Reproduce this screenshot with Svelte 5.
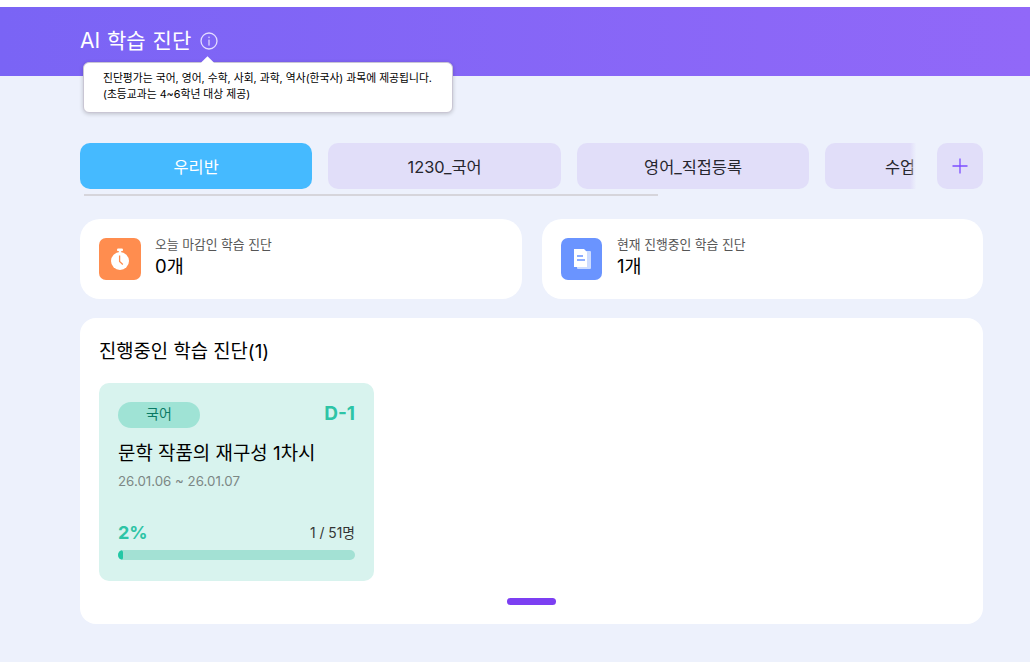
<script>
  const tabs = ['우리반', '1230_국어', '영어_직접등록', '수업활용_테스트'];
</script>

<div class="page">
  <header class="hero">
    <div class="hero-inner">
      <h1>AI 학습 진단</h1>
      <svg class="info" width="18" height="18" viewBox="0 0 18 18" fill="none">
        <circle cx="9" cy="9" r="8" stroke="#e4dcff" stroke-width="1.3" />
        <rect x="8.4" y="7.6" width="1.2" height="6" fill="#e4dcff" />
        <rect x="8.4" y="4.6" width="1.2" height="1.5" fill="#e4dcff" />
      </svg>
      <div class="tip">
        <span class="tip-arrow"></span>
        <p>진단평가는 국어, 영어, 수학, 사회, 과학, 역사(한국사) 과목에 제공됩니다.</p>
        <p>(초등교과는 4~6학년 대상 제공)</p>
      </div>
    </div>
  </header>

  <main class="content">
    <div class="tabs-row">
      <div class="tabs-view">
        <div class="tabs">
          {#each tabs as t, i}
            <button class="tab" class:active={i === 0}>{t}</button>
          {/each}
        </div>
        <span class="fade"></span>
      </div>
      <button class="add" aria-label="추가">
        <svg width="16" height="16" viewBox="0 0 16 16"><path d="M8 .5v15M.5 8h15" stroke="#7c4dff" stroke-width="1.3" fill="none" /></svg>
      </button>
    </div>
    <div class="track"></div>

    <section class="stats">
      <div class="stat">
        <div class="ico orange">
          <svg width="22" height="24" viewBox="0 0 22 24">
            <rect x="8" y="1.5" width="6" height="2.6" rx="1.2" fill="#fff" />
            <rect x="9.8" y="3" width="2.4" height="3" fill="#fff" />
            <circle cx="11" cy="14" r="9" fill="#fff" />
            <path d="M10.6 8.5v6l3.2 3" stroke="#ff8d4f" stroke-width="1.3" fill="none" />
          </svg>
        </div>
        <div class="stat-text">
          <span class="label">오늘 마감인 학습 진단</span>
          <strong>0개</strong>
        </div>
      </div>
      <div class="stat">
        <div class="ico blue">
          <svg width="20" height="22" viewBox="0 0 20 22">
            <rect x="5" y="3" width="14" height="18" rx="1" fill="#cddcff" />
            <path d="M2 1h10l3 3v15H2z" fill="#fff" />
            <path d="M5 8h6M5 12h8" stroke="#6a94ff" stroke-width="1.3" fill="none" />
          </svg>
        </div>
        <div class="stat-text">
          <span class="label">현재 진행중인 학습 진단</span>
          <strong>1개</strong>
        </div>
      </div>
    </section>

    <section class="panel">
      <h2>진행중인 학습 진단(1)</h2>
      <article class="card">
        <div class="card-top">
          <span class="pill">국어</span>
          <span class="dday">D-1</span>
        </div>
        <h3>문학 작품의 재구성 1차시</h3>
        <p class="date">26.01.06 ~ 26.01.07</p>
        <div class="progress-row">
          <span class="pct">2%</span>
          <span class="count">1 / 51명</span>
        </div>
        <div class="bar"><span class="fill" style="width: 2%"></span></div>
      </article>
      <div class="pager"></div>
    </section>
  </main>
</div>

<style>
  :global(body) {
    margin: 0;
    background: #fff;
    font-family: Inter, "Noto Sans CJK KR", sans-serif;
  }
  .page {
    height: 662px;
    padding-top: 7px;
    box-sizing: border-box;
    overflow: hidden;
    background: #fff;
  }
  .hero {
    height: 69px;
    background: linear-gradient(90deg, #7a64f5 0%, #9168f8 100%);
    padding-left: 80px;
  }
  .hero-inner {
    position: relative;
    display: flex;
    align-items: center;
    gap: 9px;
    height: 67px;
  }
  h1 {
    margin: 0;
    font-size: 21px;
    font-weight: 400;
    line-height: 1;
    color: #fff;
    word-spacing: 1px;
  }
  .tip {
    position: absolute;
    left: 3px;
    top: 55px;
    width: 370px;
    height: 51px;
    box-sizing: border-box;
    padding: 8px 0 0 19px;
    background: #fff;
    border: 1px solid #c9c6d4;
    border-radius: 6px;
    box-shadow: 0 1px 4px rgba(0, 0, 0, 0.2);
    z-index: 2;
  }
  .tip p {
    margin: 0;
    font-size: 10.8px;
    line-height: 16px;
    color: #000;
    white-space: nowrap;
  }
  .tip-arrow {
    position: absolute;
    left: 119px;
    top: -5px;
    width: 9px;
    height: 9px;
    background: #fff;
    transform: rotate(45deg);
  }
  .content {
    background: #edf1fc;
    height: 586px;
    padding: 67px 47px 0 80px;
    box-sizing: border-box;
  }
  .tabs-row {
    display: flex;
    gap: 20px;
    height: 46px;
  }
  .tabs-view {
    position: relative;
    width: 837px;
    overflow: hidden;
  }
  .tabs {
    display: flex;
    gap: 16.3px;
  }
  .tab {
    flex: 0 0 232.2px;
    height: 46px;
    border: 0;
    border-radius: 10px;
    background: #e1def9;
    color: #26262e;
    font: inherit;
    font-size: 16.4px;
    padding: 0;
    white-space: nowrap;
  }
  .tab.active {
    background: #45baff;
    color: #fff;
  }
  .fade {
    position: absolute;
    right: 0;
    top: 0;
    width: 7px;
    height: 46px;
    background: linear-gradient(90deg, rgba(237, 241, 252, 0), #edf1fc 90%);
  }
  .add {
    width: 46px;
    height: 46px;
    border: 0;
    border-radius: 10px;
    background: #e1def9;
    display: flex;
    align-items: center;
    justify-content: center;
    padding: 0;
  }
  .track {
    width: 574px;
    height: 2px;
    margin: 5px 0 0 4px;
    background: #d6d5db;
  }
  .stats {
    display: grid;
    grid-template-columns: 442px 441px;
    gap: 20px;
    margin-top: 23px;
  }
  .stat {
    height: 80px;
    background: #fff;
    border-radius: 20px;
    display: flex;
    align-items: center;
    gap: 14px;
    padding-left: 19px;
  }
  .ico {
    width: 42px;
    height: 42px;
    border-radius: 7px;
    display: flex;
    align-items: center;
    justify-content: center;
  }
  .orange { background: #ff8d4f; }
  .blue { background: #6a94ff; width: 41px; margin-right: 1px; }
  .stat-text {
    display: flex;
    flex-direction: column;
    gap: 0;
    margin-top: -4px;
  }
  .label {
    font-size: 12.8px;
    line-height: 18px;
    color: #555;
  }
  .stat-text strong {
    font-size: 18.5px;
    line-height: 24px;
    font-weight: 400;
    color: #000;
  }
  .panel {
    position: relative;
    height: 306px;
    margin-top: 19px;
    background: #fff;
    border-radius: 16px;
    padding: 20px 19px 0;
    box-sizing: border-box;
  }
  h2 {
    margin: 0;
    font-size: 18.8px;
    line-height: 27px;
    font-weight: 400;
    color: #000;
  }
  .card {
    width: 275px;
    height: 198px;
    margin-top: 18px;
    background: #d8f3ee;
    border-radius: 10px;
    padding: 19px 19px 0;
    box-sizing: border-box;
  }
  .card-top {
    display: flex;
    justify-content: space-between;
    align-items: center;
    height: 26px;
  }
  .pill {
    width: 82px;
    height: 26px;
    line-height: 24px;
    border-radius: 13px;
    background: #9fe3d5;
    text-align: center;
    color: #0a7a64;
    font-size: 14px;
  }
  .dday {
    font-size: 19px;
    line-height: 24px;
    font-weight: 700;
    color: #2ec4a6;
    margin-top: -2px;
  }
  h3 {
    margin: 12px 0 0;
    font-size: 18.9px;
    line-height: 27px;
    font-weight: 400;
    color: #000;
  }
  .date {
    margin: 5px 0 0;
    font-size: 13.3px;
    line-height: 18px;
    color: #7c8785;
  }
  .progress-row {
    display: flex;
    justify-content: space-between;
    align-items: center;
    margin-top: 29px;
    height: 26px;
  }
  .pct {
    font-size: 18px;
    font-weight: 700;
    color: #2ec4a6;
  }
  .count {
    font-size: 13.8px;
    color: #333;
  }
  .bar {
    height: 10px;
    margin-top: 5px;
    border-radius: 5px;
    background: #a3e1d4;
    overflow: hidden;
  }
  .fill {
    display: block;
    height: 100%;
    min-width: 5px;
    border-radius: 3px;
    background: #22c7a5;
  }
  .pager {
    position: absolute;
    left: 427px;
    top: 280px;
    width: 49px;
    height: 7px;
    border-radius: 4px;
    background: #7c3ff2;
  }
</style>
